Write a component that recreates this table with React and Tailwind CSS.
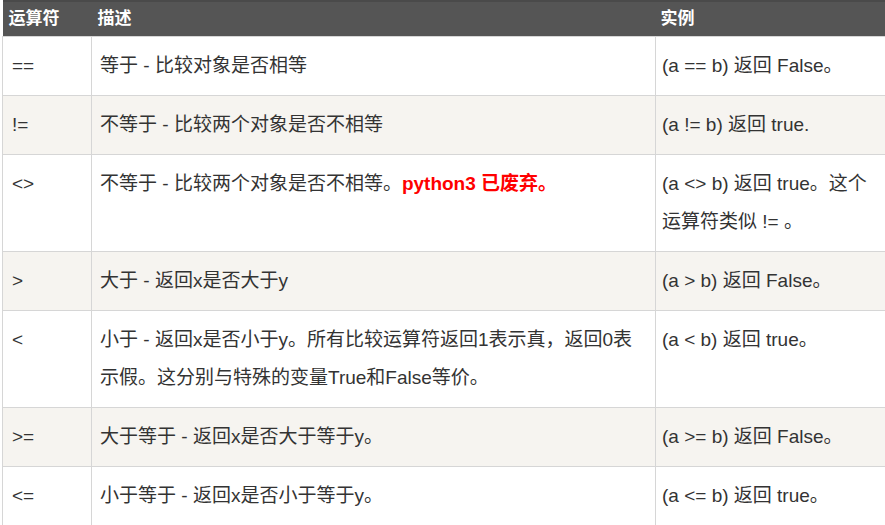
import React from 'react';

const rows = [
    { op: '==', desc: '等于 - 比较对象是否相等', ex: '(a == b) 返回 False。' },
    { op: '!=', desc: '不等于 - 比较两个对象是否不相等', ex: '(a != b) 返回 true.' },
    {
        op: '<>',
        desc: (
            <>
                不等于 - 比较两个对象是否不相等。
                <span className="font-bold text-[#ff0000]">python3 已废弃。</span>
            </>
        ),
        ex: '(a <> b) 返回 true。这个运算符类似 != 。',
    },
    { op: '>', desc: '大于 - 返回x是否大于y', ex: '(a > b) 返回 False。' },
    {
        op: '<',
        desc: '小于 - 返回x是否小于y。所有比较运算符返回1表示真，返回0表示假。这分别与特殊的变量True和False等价。',
        ex: '(a < b) 返回 true。',
    },
    { op: '>=', desc: '大于等于 - 返回x是否大于等于y。', ex: '(a >= b) 返回 False。' },
    { op: '<=', desc: '小于等于 - 返回x是否小于等于y。', ex: '(a <= b) 返回 true。' },
];

const App = () => {
    return (
        <div className="w-[885px] h-[525px] overflow-hidden bg-white font-['Liberation_Sans','Noto_Sans_CJK_SC',sans-serif]">
            <table className="ml-[2px] w-[884px] table-fixed border-collapse text-[19px] text-[#333333]">
                <colgroup>
                    <col className="w-[89px]" />
                    <col className="w-[564px]" />
                    <col className="w-[231px]" />
                </colgroup>
                <thead>
                    <tr className="h-[35px] bg-[#555555] text-white text-[17px] font-bold">
                        <th className="px-[6px] py-0 text-left align-middle border-t-2 border-[#4a4a4a]">运算符</th>
                        <th className="px-[6px] py-0 text-left align-middle border-t-2 border-[#4a4a4a]">描述</th>
                        <th className="px-[5px] py-0 text-left align-middle border-t-2 border-[#4a4a4a]">实例</th>
                    </tr>
                </thead>
                <tbody>
                    {rows.map((row, i) => (
                        <tr key={i} className={i % 2 === 1 ? 'bg-[#f6f4f0]' : 'bg-white'}>
                            <td className="border border-[#d6d6d6] px-[9px] py-[10px] align-top leading-[38px]">
                                {row.op}
                            </td>
                            <td className="border border-[#d6d6d6] px-[8px] py-[10px] align-top leading-[38px]">
                                {row.desc}
                            </td>
                            <td className="border border-[#d6d6d6] px-[6px] py-[10px] align-top leading-[38px]">
                                {row.ex}
                            </td>
                        </tr>
                    ))}
                </tbody>
            </table>
        </div>
    );
};

export default App;
